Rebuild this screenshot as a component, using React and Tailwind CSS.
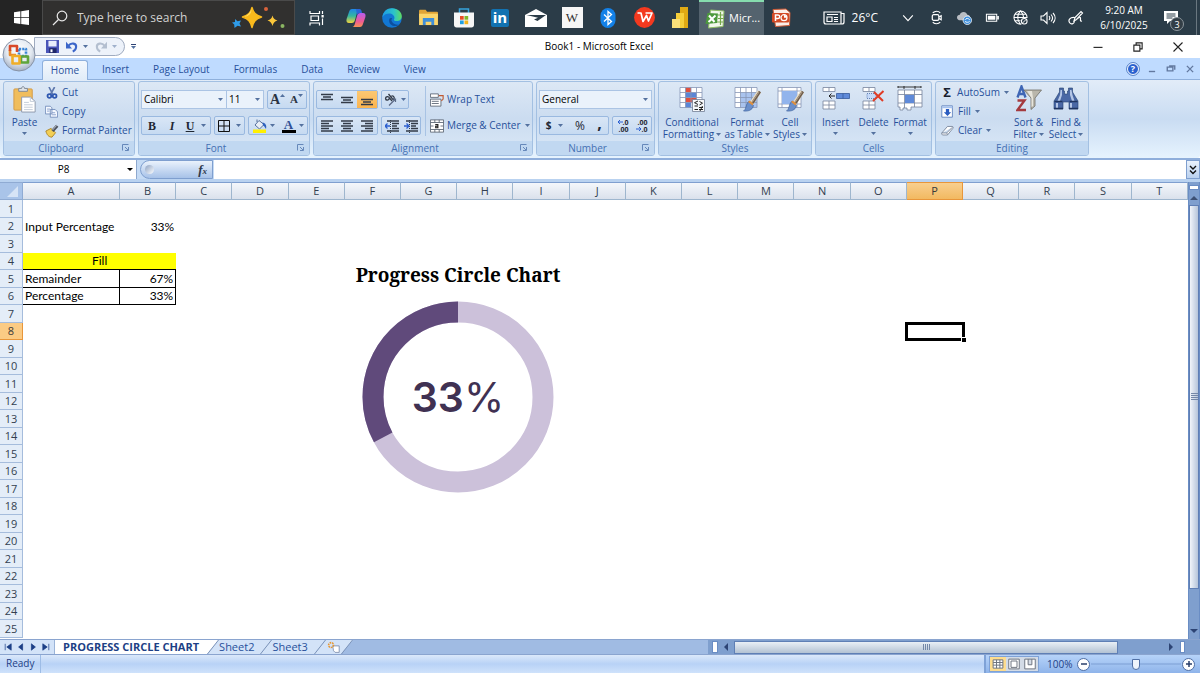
import React from "react";

/* ---------- shared bits ---------- */

function Caret({ className = "" }) {
  return (
    <svg viewBox="0 0 5 3" className={"h-[3px] w-[5px] shrink-0 fill-[#54719f] " + className} aria-hidden="true">
      <path d="M0 0h5L2.5 3z" />
    </svg>
  );
}

function Icon({ box = "0 0 16 16", className = "size-4", children }) {
  return (
    <svg viewBox={box} className={"shrink-0 " + className} fill="none" aria-hidden="true">
      {children}
    </svg>
  );
}

/* ---------- taskbar ---------- */

const WindowsLogo = () => (
  <Icon className="size-[15px]">
    <path fill="#fff" d="M0 2.3 6.8 1.3V7.6H0zM7.7 1.2 16 0v7.6H7.7zM0 8.4h6.8v6.4L0 13.8zM7.7 8.4H16V16l-8.3-1.2z" />
  </Icon>
);

const Sparkles = () => (
  <Icon box="0 0 54 24" className="h-6 w-[54px]">
    <path fill="#f9b91c" d="M20 1.500c1.500 5.500 3.500 7.500 9.500 9.500-6 2-8 4.500-9.500 10.500C18.500 15.500 16.500 13 10.500 11 16.500 9 18.500 7 20 1.500z" stroke="#f9b91c" strokeLinejoin="round" strokeWidth="1.500" />
    <path fill="#ffdc62" d="M19.500 3c.2 4-2 7-7.500 8 4-2 6-4 7.500-8z" />
    <path fill="#fbc63a" d="M40.500 9.500c.8 3 2 4 5 5-3 1-4.200 2.200-5 5.500-.8-3.300-2-4.500-5-5.500 3-1 4.200-2 5-5z" />
    <path fill="#2f9be8" d="m3 13 2.500 2.300L9 14.500l-1.500 3L9 20.500l-3.500-.7L2.500 22l-.3-3.500L0 16.500l3-.5z" />
    <circle cx="34" cy="3" r="2" fill="#d9633c" />
    <circle cx="50.500" cy="20" r="2" fill="#8bb562" />
  </Icon>
);

const TaskView = () => (
  <Icon className="size-4">
    <path stroke="#fff" strokeWidth="1.200" d="M1 1v2.500h9.500V1M2 6h7.500v4.500H2zM1 15.500v-2.500h9.500v2.500M13.500 1v3M13.500 8.500V15" />
    <path fill="#fff" d="M12.500 5h2.200v2.500h-2.200z" />
  </Icon>
);

const Copilot = () => (
  <Icon box="0 0 20 20" className="size-5">
    <defs>
      <linearGradient id="cpA" x1="0" y1="0" x2="0" y2="1">
        <stop offset="0" stopColor="#1f86e8" />
        <stop offset=".5" stopColor="#35b6a0" />
        <stop offset="1" stopColor="#f2d43c" />
      </linearGradient>
      <linearGradient id="cpB" x1="0" y1="0" x2="0" y2="1">
        <stop offset="0" stopColor="#b65cf0" />
        <stop offset=".6" stopColor="#ef5b93" />
        <stop offset="1" stopColor="#f79153" />
      </linearGradient>
    </defs>
    <path fill="url(#cpA)" d="M6 1h7.500c-1.700.5-2 2-2.600 4L9 12c-.6 2-1.300 3-3.200 3H3C1 15 0 13.500.6 11L3 4c.6-2 1.500-3 3-3z" />
    <path fill="url(#cpB)" d="M14 19H6.500c1.700-.5 2-2 2.600-4L11 8c.6-2 1.300-3 3.200-3H17c2 0 3 1.500 2.400 4L17 16c-.6 2-1.500 3-3 3z" />
    <path fill="#2a66d8" d="M10 1h3.500c1.500 0 2 1 2.500 4h-2c-2 0-2.500 1-3 2.500z" />
  </Icon>
);

const Edge = () => (
  <Icon box="0 0 20 20" className="size-5">
    <defs>
      <linearGradient id="edA" x1="0" y1="0" x2="1" y2="0">
        <stop offset="0" stopColor="#1e9be6" />
        <stop offset=".6" stopColor="#2cc4c8" />
        <stop offset="1" stopColor="#5fdc60" />
      </linearGradient>
    </defs>
    <circle cx="10" cy="10" r="9.800" fill="#1277d3" />
    <path fill="url(#edA)" d="M.3 9.200C1 3.500 5 .2 10 .2c5.800 0 9.800 4 9.800 8 0 3.200-2.400 4.800-5 4.800-2.500 0-3.400-1-2.800-1.800.8-1 .6-3-1-4.300C8.500 4.800 3.300 5 .3 9.200z" />
    <path fill="#0d4f9e" d="M7.600 10.500c-1.500 3 .5 7 4.500 7.500 2.500.3 4.500-.5 5.500-1.500-3 .8-7-.5-8-3.500-.4-1 0-2 .5-2.800-1-.4-2-.2-2.500.3z" />
  </Icon>
);

const Explorer = () => (
  <Icon box="0 0 20 18" className="h-[17px] w-[19px]">
    <path fill="#e0a437" d="M0 2c0-.8.400-1.200 1-1.200h6l1.500 2H19c.600 0 1 .4 1 1V9H0z" />
    <path fill="#fbd56b" d="M0 5h20v12H0z" />
    <path fill="#3f8ed8" d="M4 9.500h12V17h-3v-3.500H7V17H4z" />
  </Icon>
);

const Store = () => (
  <Icon box="0 0 20 20" className="size-5">
    <path stroke="#36a3dc" strokeWidth="1.500" d="M5.500 5V1h9v4" />
    <path fill="#f6f6f6" d="M0 4.500h20V17c0 1.600-1 2.500-2.500 2.500h-15C1 19.500 0 18.600 0 17z" />
    <path fill="#e74c25" d="M6 8h3.700v3.700H6z" />
    <path fill="#80b82a" d="M10.500 8h3.700v3.700h-3.700z" />
    <path fill="#22a0e2" d="M6 12.500h3.700v3.700H6z" />
    <path fill="#f5b51b" d="M10.500 12.500h3.700v3.700h-3.700z" />
  </Icon>
);

const Mail = () => (
  <Icon box="0 0 22 18" className="h-[18px] w-[22px]">
    <path fill="#fff" d="M0 6 11 0l11 6v12H0z" />
    <path fill="#2b3c48" d="M1.500 6h19.500l-8.500 6-3.500-1.500 4-1.800z" />
  </Icon>
);

const Bluetooth = () => (
  <Icon box="0 0 16 20" className="h-5 w-4">
    <rect width="15" height="20" x=".5" rx="7.500" fill="#1381e8" />
    <path stroke="#fff" strokeWidth="1.300" d="m4 6.500 7.500 7L8 16.500v-13l3.500 3-7.500 7" />
  </Icon>
);

const Wps = () => (
  <Icon box="0 0 21 21" className="size-[21px]">
    <circle cx="10.500" cy="10.500" r="10.400" fill="#f4391f" />
    <path stroke="#fff" strokeWidth="1.700" d="M3.500 6h3.500l2 8.500 3.500-6 2 5.500L18 6h-6.500" strokeLinejoin="round" />
  </Icon>
);

const PowerBi = () => (
  <Icon box="0 0 18 21" className="h-[21px] w-[18px]">
    <path fill="#e0aa14" d="M9 0h8v21H9z" />
    <path fill="#f6cf3a" d="M5 6h8v15H5z" />
    <path fill="#fbe07a" d="M1 12h8v9H1z" />
  </Icon>
);

const ExcelLogo = () => (
  <Icon box="0 0 20 20" className="size-5">
    <path fill="#f2f8ec" stroke="#8fbf66" d="M5.500 1 19 2l-1 15.500L3.500 19z" />
    <path stroke="#74a84a" strokeWidth="1.200" d="M13 6h5.500M13 9.500h5.500M12 13h6M15.500 3v13" />
    <path fill="#4c9a3c" d="M2.500 4 13 4.500 12 14 .5 15z" />
    <path stroke="#fff" strokeWidth="2" d="m4 6.500 5.500 6.500M10.500 6.500 3.500 13" />
  </Icon>
);

const PptLogo = () => (
  <Icon box="0 0 20 20" className="size-5">
    <path fill="#fbeee8" stroke="#cf5a35" d="m2 1.500 13-.5 4 3.500-.5 13-14 1z" />
    <rect x="1" y="5" width="17" height="9.500" rx="1" fill="#d24a26" />
    <path stroke="#fff" strokeWidth="1.500" d="M4.500 13V7h2.500a1.500 1.500 0 0 1 0 3.500H4.500" />
    <circle cx="13" cy="9.700" r="3" stroke="#fff" strokeWidth="1.200" />
    <path fill="#fff" d="M13 9.700V7a3 3 0 0 1 3 2.700z" />
  </Icon>
);

const News = () => (
  <Icon box="0 0 22 16" className="h-4 w-[22px]">
    <path stroke="#fff" strokeWidth="1.200" d="M1 2h17v12H3c-1.500 0-2-.7-2-2zM18 3.500h3V12c0 1.500-.7 2-2 2h-2M4 7h5v4.500H4zM4 4.500h11M11 7.500h4M11 9.500h4M11 11.500h4" />
  </Icon>
);

const tray = [
  {
    label: "Show hidden icons",
    icon: (
      <Icon className="size-[14px]">
        <path stroke="#fff" strokeWidth="1.300" d="m2.500 5 5.500 6 5.500-6" />
      </Icon>
    ),
  },
  {
    label: "Meet now",
    icon: (
      <Icon className="size-[15px]">
        <rect x="3.500" y="5" width="7" height="6" rx="1.500" stroke="#fff" strokeWidth="1.300" />
        <path stroke="#fff" strokeWidth="1.200" d="m10.500 7.500 2.500-1.500v4.500L10.500 9M4 3c2.500-2 6-2 8 0M4 13c2.500 2 6 2 8 0" />
      </Icon>
    ),
  },
  {
    label: "OneDrive",
    icon: (
      <Icon className="size-[15px]">
        <path fill="#b9bec4" d="M3.500 11C1.500 11 0 10 0 8s1.500-3 3-3c.6-2 2-3 4-3s3.500 1.200 4 3c1.500 0 3 1 3 2.500V11z" />
        <circle cx="11" cy="11" r="4.500" fill="#3f8fdc" stroke="#fff" strokeWidth=".8" />
        <path stroke="#fff" d="M8.500 10.500c1-2 4-2 5 0M13.500 12c-1 1.500-4 1.500-5 0" />
      </Icon>
    ),
  },
  {
    label: "Battery",
    icon: (
      <Icon className="size-[15px]">
        <path stroke="#fff" strokeWidth="1.100" d="M1.500 4.500h11v7.500h-11z" />
        <path fill="#fff" d="M3 6h8v4.500H3zM13 6.500h1.800v3.500H13z" />
      </Icon>
    ),
  },
  {
    label: "Network",
    icon: (
      <Icon className="size-[15px]">
        <path stroke="#fff" strokeWidth="1.100" d="M9 15A7 7 0 1 1 15 8.500M1 8h14M2 4.500h12M2 11.500h6M8 1c-4 4-4 10 0 14M8 1c2.500 2.500 3.500 5 3.300 7.500" />
        <circle cx="12" cy="12" r="3" stroke="#fff" strokeWidth="1.100" />
        <path stroke="#fff" d="m10 14 4-4" />
      </Icon>
    ),
  },
  {
    label: "Volume",
    icon: (
      <Icon className="size-4">
        <path stroke="#fff" strokeWidth="1.100" d="M1 6v4h2.500L7 13.500v-11L3.500 6zM9 6c1 1.200 1 2.800 0 4M11 4.500c1.800 2 1.800 5 0 7M13 3c2.800 3 2.800 7 0 10" />
      </Icon>
    ),
  },
  {
    label: "Pen",
    icon: (
      <Icon className="size-4">
        <path stroke="#fff" strokeWidth="1.200" d="m6 11 1-3.500 6-6 1.500 1.500-6 6.500zM6.500 7.500C2 7 0 10 1.500 12.500S6 14 6.500 11.500M8.500 9.500c2-2.500 4-3 4-1s-.5 3 1.500 2.500" />
      </Icon>
    ),
  },
];

const pinned = [
  ["Copilot", <Copilot />],
  ["Edge", <Edge />],
  ["File Explorer", <Explorer />],
  ["Store", <Store />],
  [
    "LinkedIn",
    <span className="flex size-[18px] items-center justify-center rounded-[2px] bg-[#1272b1] font-['Open_Sans',sans-serif] text-[15px] leading-none font-bold text-white">in</span>,
  ],
  ["Mail", <Mail />],
  [
    "Wikipedia",
    <span className="flex size-[21px] items-center justify-center bg-[#f6f6f6] font-['Liberation_Serif',serif] text-[13px] leading-none text-[#333]">W</span>,
  ],
  ["Bluetooth", <Bluetooth />],
  ["WPS", <Wps />],
  ["Power BI", <PowerBi />],
];

function Taskbar() {
  return (
    <header className="flex h-[35px] items-stretch bg-[#2b3c48] text-white">
      <button aria-label="Start" className="flex w-[42px] items-center justify-center bg-[#242424]">
        <WindowsLogo />
      </button>
      <label className="flex w-[253px] items-center border border-[#4a4a4a] bg-[#31302f] pr-2 pl-[9px]">
        <Icon className="size-4">
          <circle cx="10" cy="6" r="4.800" stroke="#e8e8e8" strokeWidth="1.200" />
          <path stroke="#e8e8e8" strokeWidth="1.200" d="M6.500 9.500 1 15" />
        </Icon>
        <input aria-label="Search" placeholder="Type here to search" className="ml-[9px] min-w-0 flex-1 bg-transparent text-[12px] outline-none placeholder:text-[#d2d2d2]" />
        <Sparkles />
      </label>
      <button aria-label="Task view" className="flex w-[43px] items-center justify-center">
        <TaskView />
      </button>
      {pinned.map(([name, icon]) => (
        <button key={name} aria-label={name} className="flex w-9 items-center justify-center">
          {icon}
        </button>
      ))}
      <button className="ml-px flex w-[65px] items-center gap-[4px] border-t-2 border-[#86dcae] bg-[#54636e] pl-[6px] text-[11px]">
        <ExcelLogo />
        Micr...
      </button>
      <button aria-label="PowerPoint" className="flex w-[34px] items-center justify-center">
        <PptLogo />
      </button>
      <div className="ml-auto flex items-stretch">
        <button className="mr-4 flex items-center gap-[7px] text-[12px]">
          <News />
          26°C
        </button>
        {tray.map((t) => (
          <button key={t.label} aria-label={t.label} className="flex w-7 items-center justify-center">
            {t.icon}
          </button>
        ))}
        <button className="w-[68px] text-center text-[10px] leading-[15px]">
          9:20 AM
          <br />
          6/10/2025
        </button>
        <button aria-label="Notifications" className="relative flex w-[38px] items-center pl-[6px]">
          <Icon className="size-4">
            <path fill="#fff" d="M0 1h14v10H6l-3 3v-3H0z" />
            <path stroke="#2b3c48" d="M2.500 4h9M2.500 6h9M2.500 8h6" />
          </Icon>
          <span className="absolute top-[17px] left-[12px] flex size-[14px] items-center justify-center rounded-full border border-[#8b959c] bg-[#333e46] text-[9px] leading-none">3</span>
        </button>
        <span className="mr-[3px] w-px bg-[#6a7780]" />
      </div>
    </header>
  );
}

/* ---------- title bar and ribbon tabs ---------- */

const OfficeOrb = () => (
  <Icon box="0 0 34 34" className="size-[34px]">
    <defs>
      <radialGradient id="orb" cx=".5" cy=".35" r=".65">
        <stop offset="0" stopColor="#fff" />
        <stop offset=".6" stopColor="#e3e9f1" />
        <stop offset="1" stopColor="#a3afc2" />
      </radialGradient>
    </defs>
    <circle cx="17" cy="17" r="16" fill="url(#orb)" stroke="#8793a8" />
    <g strokeWidth="2.600" strokeLinejoin="round">
      <path stroke="#3c86d6" strokeDasharray="2.200 1" d="M17 11h7v7h-7z" />
      <path stroke="#e98a2b" d="M8 12v5h6" />
      <path stroke="#d8492a" d="M8 13V8h7v6" />
      <path stroke="#5fa53a" d="M19 18.500h7v6h-7z" />
      <path stroke="#f0ae28" d="M10.500 18h7v7.500h-7z" />
    </g>
  </Icon>
);

function TitleBar() {
  return (
    <div className="flex h-[23px] items-center bg-white">
      <div className="flex flex-1 items-center">
        <div className="ml-[34px] flex h-[19px] w-[91px] items-center gap-[7px] rounded-r-full border border-[#9fabc0] bg-[#edf2fa] pl-[11px]">
          <button aria-label="Save">
            <Icon className="size-[13px]">
              <path fill="#4a55b8" d="M0 0h16v16H0z" />
              <path fill="#e9edfb" d="M3 1h10v7H3z" />
              <path fill="#1f2768" d="M4 10h9v6H4z" />
              <path fill="#fff" d="M5.500 11.500H8V15H5.500z" />
            </Icon>
          </button>
          <button aria-label="Undo" className="flex items-center gap-[5px]">
            <Icon className="size-3">
              <path stroke="#3c66c9" strokeWidth="2.800" d="M3 6.500C7 1.500 14 3 13.500 8c-.2 3-2 5-4.500 6" />
              <path fill="#3c66c9" d="M0 1v9h8z" />
            </Icon>
            <Caret />
          </button>
          <button aria-label="Redo" className="flex items-center gap-[5px]">
            <Icon className="size-3">
              <path stroke="#b4bfd0" strokeWidth="2.800" d="M13 6.500C9 1.500 2 3 2.500 8c.2 3 2 5 4.500 6" />
              <path fill="#b4bfd0" d="M16 1v9H8z" />
            </Icon>
            <Caret className="opacity-50" />
          </button>
        </div>
        <button aria-label="Customize Quick Access Toolbar" className="ml-[6px] flex flex-col items-center gap-px">
          <span className="h-px w-[5px] bg-[#2f4374]" />
          <Caret />
        </button>
      </div>
      <h1 className="text-[10px] text-black">Book1 - Microsoft Excel</h1>
      <div className="flex flex-1 items-center justify-end pr-[2px]">
        {[
          ["Minimize", "M2 8.500h12"],
          ["Restore", "M2.500 5.500h8v8h-8zM5.500 5.500v-3h8v8h-3"],
          ["Close", "m2 2 12 12M14 2 2 14"],
        ].map(([name, d]) => (
          <button key={name} aria-label={name} className="flex h-[23px] w-10 items-center justify-center">
            <Icon className="size-[12px]">
              <path stroke="#222" strokeWidth="1.500" d={d} />
            </Icon>
          </button>
        ))}
      </div>
    </div>
  );
}

function RibbonTabs() {
  return (
    <nav className="flex h-[21px] items-end bg-[#bfdbff] pl-[42px] text-[10px] text-[#27509b]">
      <button className="relative -mb-px h-5 w-[46px] rounded-t-[3px] border border-b-0 border-[#8fb0dc] bg-linear-to-b from-[#f4f8fd] to-[#e1ecf8]">Home</button>
      <div className="flex pl-[2px]">
        {["Insert", "Page Layout", "Formulas", "Data", "Review", "View"].map((t) => (
          <button key={t} className="h-5 px-3">
            {t}
          </button>
        ))}
      </div>
      <div className="ml-auto flex h-[21px] items-center gap-[7px] pr-1">
        <button aria-label="Help" className="flex size-3 items-center justify-center rounded-full border border-white bg-[#2c62cf] text-[9px] leading-none font-bold text-white outline outline-[#5c86c9]">
          ?
        </button>
        {[
          ["Minimize workbook", "M3 12h10"],
          ["Restore workbook", "M2 5h9v6H2zM5 3h9v6"],
          ["Close workbook", "m3 3 10 10M13 3 3 13"],
        ].map(([name, d]) => (
          <button key={name} aria-label={name} className="flex size-3 items-center justify-center">
            <Icon className="size-[10px]">
              <path stroke="#63799f" strokeWidth="2.200" d={d} />
            </Icon>
          </button>
        ))}
      </div>
    </nav>
  );
}

/* ---------- ribbon ---------- */

function Group({ title, width, launcher, children }) {
  return (
    <section className={"flex h-[75px] shrink-0 flex-col overflow-hidden rounded-[3px] border border-[#a3c0e2] bg-linear-to-b from-[#dde8f5] via-[#cbdcf0] to-[#dae8f7] " + width}>
      <div className="flex min-h-0 flex-1 items-start">{children}</div>
      <h2 className={"relative flex h-[14px] shrink-0 items-center justify-center bg-[#c1d8f1] text-[10px] text-[#4570b3] " + (launcher ? "pr-4" : "")}>
        {title}
        {launcher && (
          <button aria-label={title + " options"} className="absolute right-1 flex size-[8px]">
            <Icon box="0 0 8 8" className="size-[8px]">
              <path stroke="#6688ba" d="M.5 6.500v-6h6M3 3l3 3M6.500 3v3.500H3" />
            </Icon>
          </button>
        )}
      </h2>
    </section>
  );
}

const Box = ({ className = "", children }) => (
  <div className={"flex h-[19px] items-stretch rounded-[2px] border border-[#9ab9e0] bg-linear-to-b from-[#d9e6f6] to-[#c6daf1] " + className}>{children}</div>
);

const Tool = ({ label, className = "w-5", children }) => (
  <button aria-label={label} className={"flex items-center justify-center gap-[3px] " + className}>
    {children}
  </button>
);

function Combo({ label, value, options, className }) {
  return (
    <label className={"relative flex h-[19px] items-center border border-[#abc4e4] bg-[#eaf2fb] " + className}>
      <select aria-label={label} defaultValue={value} className="w-full appearance-none bg-transparent pl-[2px] text-[10px] text-black outline-none">
        {options.map((o) => (
          <option key={o}>{o}</option>
        ))}
      </select>
      <Caret className="pointer-events-none absolute right-[3px]" />
    </label>
  );
}

function BigButton({ icon, lines, className }) {
  return (
    <button className={"flex flex-col items-center pt-[2px] text-[10px] leading-[12px] text-[#27509b] " + className}>
      <span className="flex h-[30px] items-center">{icon}</span>
      <span className="mt-[2px] whitespace-nowrap">{lines[0]}</span>
      {lines[1] ? (
        <span className="flex items-center gap-[2px] whitespace-nowrap">
          {lines[1]}
          <Caret />
        </span>
      ) : (
        <Caret className="mt-[4px]" />
      )}
    </button>
  );
}

const SmallButton = ({ icon, caret, children }) => (
  <button className="flex h-[19px] items-center gap-1 text-[10px] whitespace-nowrap text-[#27509b]">
    <span className="flex w-[13px] justify-center">{icon}</span>
    {children}
    {caret && <Caret />}
  </button>
);

const Lines = ({ d }) => (
  <Icon box="0 0 14 14" className="size-[14px]">
    <path stroke="#333b48" strokeWidth="1.600" d={d} />
  </Icon>
);

const PasteIcon = () => (
  <Icon box="0 0 24 28" className="h-[27px] w-6">
    <rect x=".5" y="3" width="19" height="22" rx="1" fill="#f0bd5c" stroke="#d39a45" />
    <path fill="#dfe3e8" stroke="#7d8796" d="M5.500 2.500h3c0-2.500 3-2.500 3 0h3v3h-9z" />
    <path fill="#fff" stroke="#8e99ac" d="M8.500 11.500h9l5 4.500v11h-14z" />
    <path stroke="#c3ccd9" d="M17.500 11.500V16h5M11 17h5M11 19.500h9M11 22h9M11 24.500h9" />
  </Icon>
);
const CutIcon = () => (
  <Icon className="size-3">
    <path stroke="#5e78ad" strokeWidth="2.200" d="m4 0 5 10M11.500 0 6 10" />
    <circle cx="4.500" cy="12" r="2.500" stroke="#2f58b0" strokeWidth="2.400" />
    <circle cx="11.500" cy="12" r="2.500" stroke="#2f58b0" strokeWidth="2.400" />
  </Icon>
);
const CopyIcon = () => (
  <Icon className="size-[13px]">
    <path fill="#f4f8ff" stroke="#6984b5" d="M.5 1.500h6l2 2V11h-8zM6.500 5.500h6l3 3V15h-9z" />
    <path stroke="#7b95c4" d="M2.500 5h4M2.500 7.500h3M8.500 9.500h4M8.500 12h5" />
  </Icon>
);
const PainterIcon = () => (
  <Icon className="size-[14px]">
    <path fill="#f3cf55" stroke="#a98024" d="m1 8 6-3 5 5-4 5c-4 0-6-3-7-7z" />
    <path stroke="#4a505c" strokeWidth="3.500" d="m8.500 8 5.500-6" />
    <path stroke="#cfd6e2" strokeWidth="1" d="m8.500 7 5-5.500" />
  </Icon>
);

const Brush = () => (
  <g>
    <path stroke="#e9ddc3" strokeWidth="4" d="M25.500 5.500 18 16.500" />
    <path stroke="#6d5c4c" strokeWidth="2.600" d="M26 5.500 18.500 17" />
    <path stroke="#c4b19a" strokeWidth=".8" d="M25 6 18 16.500" />
    <path fill="#6b8fca" stroke="#365c9b" strokeWidth=".6" d="m14.500 15.500 5 4c-1 5-6 6-10 5.500 3-1.500 2-6.500 5-9.500z" />
    <path fill="#e0913f" d="m15.500 14.500 4 3-1 2-4.500-3.500z" />
  </g>
);
const GridLines = () => <path stroke="#8696b5" strokeWidth=".8" d="M1 1.500h22v20H1zM1 6.500h22M1 11.500h22M1 16.500h22M6.500 1.500v20M12 1.500v20M17.500 1.500v20" />;
const CondIcon = () => (
  <Icon box="0 0 27 26" className="h-[26px] w-[27px]">
    <path fill="#fff" d="M1 1.500h22v20H1z" />
    <path fill="#e0503f" d="M6.500 1.500H12v5H6.500zM6.500 11.500h11v5h-11z" />
    <path fill="#5b86d6" d="M6.500 6.500h11v5h-11zM6.500 16.500H12v5H6.500z" />
    <GridLines />
    <path fill="#f6f8fb" stroke="#727f96" strokeWidth=".8" d="M13.500 13.500h12v12h-12z" />
    <path stroke="#222" d="m19 15-3.500 1.700L19 18.500M15.500 20H19M20.500 15.500l3 1.700-3 1.800M20 21.500h4M20 23.500h4M15.500 23.500H19M23.500 20l-2.500 5" />
  </Icon>
);
const FormatTableIcon = () => (
  <Icon box="0 0 27 26" className="h-[26px] w-[27px]">
    <path fill="#fff" d="M1 1.500h22v20H1z" />
    <path fill="#a9c3ee" d="M6.500 6.500H23v15H6.500z" />
    <GridLines />
    <Brush />
  </Icon>
);
const CellStylesIcon = () => (
  <Icon box="0 0 27 26" className="h-[26px] w-[27px]">
    <path fill="#fff" stroke="#8696b5" strokeWidth=".8" d="M1 1.500h23v20H1zM1 5h23M1 18h23M5 1.500v20M20 1.500v20" />
    <path fill="#92b4ec" d="M5 5h15v13H5z" />
    <Brush />
  </Icon>
);
const InsertIcon = () => (
  <Icon box="0 0 28 26" className="h-[26px] w-7">
    <path fill="#fff" stroke="#76839c" strokeWidth=".8" d="M1 1.500h12v4H1zM7 1.500v4M1 15h12v8H1zM7 15v8M1 19h12" />
    <path fill="#5f8ad9" stroke="#365a9c" strokeWidth=".8" d="M14.500 7.500h13v5h-13zM21 7.500v5" />
    <path stroke="#222" d="M13 10H7M9.500 7.500 7 10l2.500 2.500" />
  </Icon>
);
const DeleteIcon = () => (
  <Icon box="0 0 28 26" className="h-[26px] w-7">
    <path fill="#fff" stroke="#76839c" strokeWidth=".8" d="M3 1.500h12v4H3zM9 1.500v4M3 15h12v8H3zM9 15v8M3 19h12" />
    <path fill="#c5dafa" stroke="#4b6ba5" strokeWidth=".8" strokeDasharray="1 1" d="M7 7.500h9v5H7z" />
    <path stroke="#e03c26" strokeWidth="2" d="m14 6 9 9M23.500 5 13 15" />
  </Icon>
);
const FormatIcon = () => (
  <Icon box="0 0 28 26" className="h-[26px] w-7">
    <path stroke="#222" strokeWidth=".9" d="M2 1h23M8 0v3M19 0v3M2 0v2M25 0v2" />
    <path fill="#fff" stroke="#76839c" strokeWidth=".8" d="M2 4h24v17H15v3h-4v-2H7v2H4v-3H2zM8.500 4v18M18.500 4v17M2 8.500h24M2 17h24" />
    <path fill="#5f8ad9" d="M9 9h9v8H9z" />
  </Icon>
);
const FillIcon = () => (
  <Icon className="size-[13px]">
    <path fill="#fff" stroke="#5276b6" d="M1 1h13v14H1z" />
    <path fill="#a7c3ef" d="M1.500 1.500H14V4H1.500z" />
    <path fill="#2a5cc0" d="M6 5h4v4h2.500L8 13.500 3.500 9H6z" />
  </Icon>
);
const ClearIcon = () => (
  <Icon className="size-[13px]">
    <path fill="#fff" stroke="#6d7a90" d="M1 11 8 3h5.500c1.500 0 2 1 1 2.500L8 13.500H2.500C1 13.500.3 12 1 11zM1 11h6l7-7M7 11l1 2" />
  </Icon>
);
const SortIcon = () => (
  <Icon box="0 0 26 28" className="h-7 w-[26px]">
    <path stroke="#3f66b5" strokeWidth="2.400" d="m1.500 12.500 4-11 4 11M3 9h5" />
    <path stroke="#a43a3f" strokeWidth="2.400" d="M1.500 15.500h7l-7 9.500H10" />
    <path fill="#b9b6ab" stroke="#6f6d66" strokeWidth=".8" d="M8 5h17.500l-6.500 8v8l-4 3.500V13z" />
    <path fill="#e7e5dc" d="M11 6h5l1 7v8l-1.500 1V13z" />
  </Icon>
);
const FindIcon = () => (
  <Icon box="0 0 26 26" className="size-[26px]">
    <path fill="#4a68a5" stroke="#24406f" strokeWidth=".6" d="M6.500 2h4v3h1v3h3V5h1V2h4v4l3 5 2.500 4v8h-9v-7h-6v7H1v-8l2.500-4 3-5z" />
    <path fill="#b4c6e6" d="M7.500 4H9v5l-2 6H4.500L7 9zM17 4h1.500l1 5 2 6H19l-2-6zM3 17h2v5H3zM17 17h2v5h-2z" />
    <path stroke="#1f345f" strokeWidth="1.400" d="M1 22.500h9M16 22.500h9M1.500 15.500h8M16.500 15.500h8" />
  </Icon>
);

function Ribbon() {
  return (
    <div className="rounded-b-[3px] border-t border-[#8fb0dc] bg-linear-to-b from-[#e2ecf8] via-[#c9dcf2] to-[#e6f3fe] pt-px pb-[2px] text-[10px]">
      <div className="flex gap-[3px] pl-[3px]">
        <Group title="Clipboard" width="w-[132px]" launcher>
          <BigButton icon={<PasteIcon />} lines={["Paste"]} className="w-[41px]" />
          <div className="flex flex-col pt-px">
            <SmallButton icon={<CutIcon />}>Cut</SmallButton>
            <SmallButton icon={<CopyIcon />}>Copy</SmallButton>
            <SmallButton icon={<PainterIcon />}>Format Painter</SmallButton>
          </div>
        </Group>

        <Group title="Font" width="w-[172px]" launcher>
          <div className="flex flex-col gap-[7px] pt-2 pl-[2px]">
            <div className="flex">
              <Combo label="Font" value="Calibri" options={["Calibri", "Cambria", "Arial"]} className="w-[86px]" />
              <Combo label="Font size" value="11" options={["10", "11", "12"]} className="-ml-px w-[38px]" />
              <Box className="ml-[3px]">
                <Tool label="Increase font size" className="w-[19px] font-['Liberation_Serif',serif] text-[14px] font-bold text-[#2b3342]">
                  <span>A</span>
                  <Caret className="-mt-[8px] -ml-[3px] rotate-180" />
                </Tool>
                <Tool label="Decrease font size" className="w-[19px] font-['Liberation_Serif',serif] text-[11px] font-bold text-[#2b3342]">
                  <span>A</span>
                  <Caret className="-mt-[8px] -ml-[3px]" />
                </Tool>
              </Box>
            </div>
            <div className="flex gap-[3px] font-['Liberation_Serif',serif] text-[12px] text-[#1f2733]">
              <Box className="w-[70px]">
                <Tool label="Bold" className="w-[20px] font-bold">
                  <b>B</b>
                </Tool>
                <Tool label="Italic" className="w-[20px] font-bold italic">I</Tool>
                <Tool label="Underline" className="w-[28px] gap-[7px] font-bold">
                  <u>U</u>
                  <Caret />
                </Tool>
              </Box>
              <Box>
                <Tool label="Borders" className="w-[29px] gap-[6px]">
                  <Icon box="0 0 12 12" className="size-3">
                    <path stroke="#111" d="M.5.5h11v11H.5zM6 .5v11M.5 6h11" />
                  </Icon>
                  <Caret />
                </Tool>
              </Box>
              <Box>
                <Tool label="Fill color" className="w-[29px] gap-1">
                  <Icon box="0 0 14 14" className="size-[14px]">
                    <path fill="#e9eef7" stroke="#56709c" d="m2 6 4-4.500 5 4-4.500 4.500zM4 3V.5" />
                    <path fill="#2f61bd" d="M9.500 3.500c3 .5 4.500 3 3.500 6.500-1-1.500-1.500-3-3-3.500z" />
                    <path fill="#ffef00" d="M0 10.500h13V14H0z" />
                  </Icon>
                  <Caret />
                </Tool>
                <Tool label="Font color" className="w-[29px] gap-1">
                  <span className="flex h-[14px] w-[14px] items-center justify-center border-b-[3px] border-black text-[13px] leading-none font-bold text-[#2f4f94]">A</span>
                  <Caret />
                </Tool>
              </Box>
            </div>
          </div>
        </Group>

        <Group title="Alignment" width="w-[220px]" launcher>
          <div className="flex flex-col gap-[7px] pt-2 pl-[2px]">
            <div className="flex gap-[3px]">
              <Box>
                <Tool label="Top align">
                  <Lines d="M1 1.500h12M3 4h8M1 6.500h12" />
                </Tool>
                <Tool label="Middle align">
                  <Lines d="M1 4.500h12M3 7h8M1 9.500h12" />
                </Tool>
                <Tool label="Bottom align" className="w-5 bg-linear-to-b from-[#fbc873] to-[#fcb44e]">
                  <Lines d="M1 6.500h12M3 9h8M1 11.500h12" />
                </Tool>
              </Box>
              <Box>
                <Tool label="Orientation" className="w-[26px]">
                  <Icon box="0 0 14 14" className="size-[14px]">
                    <path stroke="#333b48" strokeWidth="1.300" d="M1.500 5.500c0-2 3-2.500 4-.5L8 8M1.500 5.500C2 8 5 7.500 5.500 5M4.500 1 9 6.500c2-.5 1.500-4-1.500-3.500" />
                    <path stroke="#5b6a86" strokeWidth="1.200" d="m5 12.500 6-6M11.500 9V6H8.500" />
                  </Icon>
                  <Caret />
                </Tool>
              </Box>
            </div>
            <div className="flex gap-[3px]">
              <Box>
                <Tool label="Align left">
                  <Lines d="M1 2h12M1 4.500h8M1 7h12M1 9.500h8M1 12h12" />
                </Tool>
                <Tool label="Center">
                  <Lines d="M1 2h12M3 4.500h8M1 7h12M3 9.500h8M1 12h12" />
                </Tool>
                <Tool label="Align right">
                  <Lines d="M1 2h12M5 4.500h8M1 7h12M5 9.500h8M1 12h12" />
                </Tool>
              </Box>
              <Box>
                {[
                  ["Decrease indent", "M5 7H0M2.500 4.500 0 7l2.500 2.500"],
                  ["Increase indent", "M0 7h5M2.500 4.500 5 7 2.500 9.500"],
                ].map(([label, d]) => (
                  <Tool key={label} label={label} className="w-[19px]">
                    <Icon box="0 0 14 14" className="size-[14px]">
                      <path stroke="#333b48" strokeWidth="1.500" d="M2 2h12M7 4.500h7M7 7h5M7 9.500h7M2 12h12" />
                      <path stroke="#333b48" strokeDasharray="1 1" d="M5.500 1v13" />
                      <path stroke="#2c5fd0" strokeWidth="1.300" d={d} />
                    </Icon>
                  </Tool>
                ))}
              </Box>
            </div>
          </div>
          <div className="mt-1 ml-[4px] h-[50px] w-px bg-[#a8c3e4]" />
          <div className="flex flex-col gap-[7px] pt-2 pl-[4px]">
            <SmallButton
              icon={
                <Icon className="size-[14px]">
                  <path fill="#fff" stroke="#5c6674" d="M.5 1h9v4h-9zM.5 7h12v8H.5z" />
                  <path stroke="#5c6674" d="M2 9.500h8M2 12h8" />
                  <path stroke="#c05a31" strokeWidth="1.300" d="M10 3h5v4l-2 2" />
                </Icon>
              }
            >
              Wrap Text
            </SmallButton>
            <SmallButton
              caret
              icon={
                <Icon className="size-[14px]">
                  <path fill="#fff" stroke="#5c6674" d="M.5 1h15v14H.5z" />
                  <path stroke="#5c6674" d="M.5 4h15M.5 12h15M5.500 1v3M10.500 1v3M5.500 12v3M10.500 12v3M1 8h3M12 8h3" />
                  <path stroke="#222" strokeWidth="1.300" d="M6 6.500h3V10H6.500V8.300H9" />
                </Icon>
              }
            >
              Merge &amp; Center
            </SmallButton>
          </div>
        </Group>

        <Group title="Number" width="w-[119px]" launcher>
          <div className="flex flex-col gap-[7px] pt-2 pl-[2px]">
            <Combo label="Number format" value="General" options={["General", "Number", "Percentage"]} className="w-[113px]" />
            <div className="flex gap-[3px] text-[#1f2733]">
              <Box className="w-[70px]">
                <Tool label="Currency" className="w-[29px] gap-[7px] font-bold">
                  $
                  <Caret />
                </Tool>
                <Tool label="Percent style" className="w-[22px] text-[12px]">%</Tool>
                <Tool label="Comma style" className="w-[17px] pb-[6px] text-[16px] font-bold">,</Tool>
              </Box>
              <Box>
                {[
                  ["Increase decimal", ".0", ".00", "M6 2H1M3 0 1 2l2 2", false],
                  ["Decrease decimal", ".00", ".0", "M0 2h5M3 0l2 2-2 2", true],
                ].map(([label, a, b, d, low]) => (
                  <Tool key={label} label={label} className="w-[19px]">
                    <span className="flex flex-col items-end text-[7px] leading-[7px] font-bold">
                      <span className="flex items-center">
                        {!low && (
                          <Icon box="0 0 6 4" className="h-1 w-[6px]">
                            <path stroke="#2c5fd0" d={d} />
                          </Icon>
                        )}
                        {a}
                      </span>
                      <span className="flex items-center">
                        {low && (
                          <Icon box="0 0 6 4" className="h-1 w-[6px]">
                            <path stroke="#2c5fd0" d={d} />
                          </Icon>
                        )}
                        {b}
                      </span>
                    </span>
                  </Tool>
                ))}
              </Box>
            </div>
          </div>
        </Group>

        <Group title="Styles" width="w-[154px]">
          <BigButton icon={<CondIcon />} lines={["Conditional", "Formatting"]} className="w-[66px]" />
          <BigButton icon={<FormatTableIcon />} lines={["Format", "as Table"]} className="w-[44px]" />
          <BigButton icon={<CellStylesIcon />} lines={["Cell", "Styles"]} className="w-[42px]" />
        </Group>

        <Group title="Cells" width="w-[117px]">
          <BigButton icon={<InsertIcon />} lines={["Insert"]} className="w-[39px]" />
          <BigButton icon={<DeleteIcon />} lines={["Delete"]} className="w-[37px]" />
          <BigButton icon={<FormatIcon />} lines={["Format"]} className="w-[36px]" />
        </Group>

        <Group title="Editing" width="w-[154px]">
          <div className="flex w-[73px] flex-col pt-px pl-[5px]">
            <SmallButton caret icon={<span className="text-[13px] leading-none font-bold text-[#16202e]">Σ</span>}>
              AutoSum
            </SmallButton>
            <SmallButton caret icon={<FillIcon />}>
              Fill
            </SmallButton>
            <SmallButton caret icon={<ClearIcon />}>
              Clear
            </SmallButton>
          </div>
          <BigButton icon={<SortIcon />} lines={["Sort &", "Filter"]} className="w-[39px]" />
          <BigButton icon={<FindIcon />} lines={["Find &", "Select"]} className="w-[36px]" />
        </Group>
      </div>
    </div>
  );
}

/* ---------- formula bar ---------- */

function FormulaBar() {
  return (
    <div className="flex h-[24px] items-stretch border-t-2 border-b-[3px] border-t-[#8faedb] border-b-[#b9d2f0] bg-[#c5dbf5]">
      <div className="flex w-[137px] items-center border-r border-[#8ea9cf] bg-white">
        <input aria-label="Name box" defaultValue="P8" className="min-w-0 flex-1 text-center text-[10px] text-black outline-none" />
        <button aria-label="Names" className="mr-[3px]">
          <svg viewBox="0 0 6 3" className="h-[3px] w-[6px]" aria-hidden="true">
            <path d="M0 0h6L3 3z" />
          </svg>
        </button>
      </div>
      <div className="mr-px ml-[3px] flex w-[73px] items-center justify-between rounded-l-full border border-[#7f9fcf] bg-linear-to-b from-[#eaf2fc] to-[#a7c2e8] pr-[5px] pl-1">
        <span className="size-[9px] rounded-full bg-linear-to-br from-[#8ea3c3] to-white" />
        <button className="font-['Liberation_Serif',serif] text-[13px] leading-none font-bold text-[#2f3a4c] italic">
          f<span className="text-[9px]">x</span>
        </button>
      </div>
      <input aria-label="Formula" className="min-w-0 flex-1 bg-white px-1 text-[11px] outline-none" />
      <button aria-label="Expand formula bar" className="flex w-[14px] items-center justify-center border border-[#7f9fcf] bg-linear-to-b from-[#eaf2fc] to-[#b9d0ee]">
        <Icon box="0 0 8 10" className="h-[10px] w-2">
          <path stroke="#111" strokeWidth="1.400" d="m1 1 3 3 3-3M1 5.500l3 3 3-3" />
        </Icon>
      </button>
    </div>
  );
}

/* ---------- worksheet ---------- */

const columns = "ABCDEFGHIJKLMNOPQRST".split("");
const rows = Array.from({ length: 25 }, (_, i) => i + 1);

function cellsFor(row) {
  if (row === 4) {
    return (
      <>
        <td colSpan={2} className="border-b border-black bg-[#ffff00] p-0 text-center">
          Fill
        </td>
        {columns.slice(2).map((c) => (
          <td key={c} className="p-0" />
        ))}
      </>
    );
  }
  const text = {
    A2: "Input Percentage",
    B2: "33%",
    A5: "Remainder",
    B5: "67%",
    A6: "Percentage",
    B6: "33%",
  };
  return columns.map((c) => {
    const boxed = (row === 5 || row === 6) && (c === "A" || c === "B");
    return (
      <td
        key={c}
        className={
          (boxed ? "border-r border-b border-black " : "") + (c === "B" ? "py-0 pr-[2px] pl-0 text-right" : c === "A" ? "py-0 pr-0 pl-[2px]" : "relative p-0")
        }
      >
        {text[c + row]}
        {c === "P" && row === 8 && (
          <div className="absolute -inset-x-[2px] -inset-y-px border-[3px] border-black">
            <span className="absolute -right-[4px] -bottom-[4px] size-[5px] border-t border-l border-white bg-black" />
          </div>
        )}
      </td>
    );
  });
}

function ProgressChart() {
  const r = 85;
  const len = 2 * Math.PI * r;
  return (
    <figure className="absolute top-[80px] left-[348px] flex w-[220px] flex-col items-center">
      <figcaption className="font-['Noto_Serif','Liberation_Serif',serif] text-[19px] leading-[26px] font-bold whitespace-nowrap text-black">Progress Circle Chart</figcaption>
      <div className="mt-[13px] grid place-items-center">
        <svg viewBox="0 0 192 192" className="col-start-1 row-start-1 size-[192px] -rotate-90" fill="none" aria-hidden="true">
          <circle cx="96" cy="96" r={r} stroke="#ccc1da" strokeWidth="21" />
          <circle cx="96" cy="96" r={r} stroke="#604a7b" strokeWidth="21" strokeDasharray={len * 0.33 + " " + len} strokeDashoffset={-len * 0.67} />
        </svg>
        <div className="col-start-1 row-start-1 font-['Inter',sans-serif] text-[41px] leading-none font-semibold text-[#403152]">
          33<span className="font-normal">%</span>
        </div>
      </div>
    </figure>
  );
}

function Sheet() {
  return (
    <main className="flex flex-1">
      <div className="relative min-w-0 flex-1 bg-white">
        <table className="w-full table-fixed border-separate border-spacing-0 font-['Lato',sans-serif] text-[12px] leading-[14px] text-black">
          <colgroup>
            <col className="w-[23px]" />
            <col className="w-[97px]" />
            {columns.slice(1).map((c) => (
              <col key={c} />
            ))}
          </colgroup>
          <thead>
            <tr className="h-[18px] font-['Open_Sans',sans-serif] text-[11px]">
              <th className="border border-l-0 border-[#8fabd3] bg-[#a9c4e9] p-0">
                <svg viewBox="0 0 22 16" className="h-4 w-[22px]" aria-hidden="true">
                  <path fill="#d6e4f6" d="M18 3v11H7z" />
                </svg>
              </th>
              {columns.map((c) => (
                <th
                  key={c}
                  className={
                    "border-y border-r p-0 font-normal " +
                    (c === "P"
                      ? "border-[#e8963a] bg-linear-to-b from-[#f8cf8e] to-[#f2b960] text-[#3a3a3a]"
                      : "border-[#9eb6ce] border-t-[#7f9fcf] bg-linear-to-b from-[#f4f7fb] to-[#dae1ec] text-[#333f50]")
                  }
                >
                  {c}
                </th>
              ))}
            </tr>
          </thead>
          <tbody>
            {rows.map((r) => (
              <tr key={r} className="h-[18px] even:h-[17px]">
                <th className={"border-r border-b p-0 font-['Open_Sans',sans-serif] text-[11px] font-normal " + (r === 8 ? "border-[#e8963a] bg-[#fbcb84] text-[#3a3a3a]" : "border-[#a5bcdc] bg-[#e4edf8] text-[#333f50]")}>{r}</th>
                {cellsFor(r)}
              </tr>
            ))}
          </tbody>
        </table>
        <ProgressChart />
      </div>
      <div className="flex w-3 flex-col items-center border-x border-[#6a8dc4] bg-[#7f9fce] pt-[3px] pb-1">
        <span className="h-[5px] w-full border border-[#6a8dc4] bg-white" />
        <button aria-label="Scroll up" className="flex h-[15px] items-center">
          <Icon box="0 0 8 4" className="h-1 w-2">
            <path fill="#3d5074" d="M4 0l4 4H0z" />
          </Icon>
        </button>
        <div className="flex w-full flex-[10] flex-col items-center justify-center gap-px border border-[#5f7fb5] bg-linear-to-r from-[#f1f5fa] to-[#b6c5da]">
          <i className="h-px w-[7px] bg-[#7488a8]" />
          <i className="h-px w-[7px] bg-[#7488a8]" />
          <i className="h-px w-[7px] bg-[#7488a8]" />
          <i className="h-px w-[7px] bg-[#7488a8]" />
        </div>
        <div className="flex-1" />
        <button aria-label="Scroll down" className="flex h-2 items-center">
          <Icon box="0 0 8 4" className="h-1 w-2">
            <path fill="#2d4474" d="M0 0h8L4 4z" />
          </Icon>
        </button>
      </div>
    </main>
  );
}

/* ---------- sheet tabs ---------- */

const Slant = ({ left, right }) => (
  <svg viewBox="0 0 12 14" className="h-[14px] w-3 shrink-0" aria-hidden="true">
    <path className={left} d="M0 0h12L0 14z" />
    <path className={right} d="M12 0v14H0z" />
    <path d="M11.500 0 .5 14" stroke="#7c93b8" fill="none" />
  </svg>
);

function SheetTabs() {
  return (
    <div className="flex h-4 items-start border-t border-b border-[#8aa4cf] bg-[#a0bbe3] text-[11px] leading-[14px] text-[#27509b]">
      <div className="flex h-[14px] w-[55px] items-center justify-around border-r border-[#9bb4d8] bg-[#d3e3f8] px-[2px]">
        {[
          ["First sheet", "M1.500 1v8M9 1v8L3.500 5z"],
          ["Previous sheet", "M7 1v8L2 5z"],
          ["Next sheet", "M3 1v8l5-4z"],
          ["Last sheet", "M8.500 1v8M1 1v8l5.500-4z"],
        ].map(([label, d]) => (
          <button key={label} aria-label={label}>
            <Icon box="0 0 10 10" className="size-2">
              <path fill="#1c3f86" stroke="#1c3f86" strokeWidth=".9" d={d} />
            </Icon>
          </button>
        ))}
      </div>
      <button className="h-[14px] bg-white pr-2 pl-2 font-bold text-[#1d3f85]">PROGRESS CIRCLE CHART</button>
      <Slant left="fill-white" right="fill-[#d3e3f8]" />
      <button className="h-[14px] bg-[#d3e3f8] pr-[6px]">Sheet2</button>
      <Slant left="fill-[#d3e3f8]" right="fill-[#d3e3f8]" />
      <button className="h-[14px] bg-[#d3e3f8] pr-[6px]">Sheet3</button>
      <Slant left="fill-[#d3e3f8]" right="fill-[#d3e3f8]" />
      <button aria-label="Insert worksheet" className="flex h-[14px] w-[15px] items-center justify-center bg-[#d3e3f8]">
        <Icon className="size-[13px]">
          <path fill="#fff" stroke="#7688a8" d="M7 6h8v8h-5l-2-2z" />
          <circle cx="5" cy="5" r="3" stroke="#e8962e" strokeWidth="2" strokeDasharray="2 1" />
        </Icon>
      </button>
      <Slant left="fill-[#d3e3f8]" right="fill-[#a0bbe3]" />
      <div className="ml-auto flex h-[14px] w-[41%] items-center bg-[#7f9fce]">
        <span className="ml-1 h-3 w-[6px] border border-[#6a8dc4] bg-white" />
        <button aria-label="Scroll left" className="flex w-4 justify-center">
          <Icon box="0 0 4 8" className="h-2 w-1">
            <path fill="#2d4474" d="M4 0v8L0 4z" />
          </Icon>
        </button>
        <div className="flex h-[13px] flex-[8] items-center justify-center gap-px border border-[#5f7fb5] bg-linear-to-b from-[#e9eff6] to-[#b3c2d3]">
          <i className="h-[6px] w-px bg-[#7488a8]" />
          <i className="h-[6px] w-px bg-[#7488a8]" />
          <i className="h-[6px] w-px bg-[#7488a8]" />
          <i className="h-[6px] w-px bg-[#7488a8]" />
        </div>
        <div className="flex-1" />
        <button aria-label="Scroll right" className="flex w-[10px] justify-center">
          <Icon box="0 0 4 8" className="h-2 w-1">
            <path fill="#2d4474" d="M0 0v8l4-4z" />
          </Icon>
        </button>
        <span className="mr-[15px] ml-[4px] h-3 w-[5px] border border-[#6a8dc4] bg-white" />
      </div>
    </div>
  );
}

/* ---------- status bar ---------- */

function StatusBar() {
  return (
    <footer className="flex h-[18px] items-stretch bg-linear-to-b from-[#dbe8fa] via-[#b8d2f6] to-[#cfe2fb] text-[10px] leading-[16px] text-[#1d3f85]">
      <span className="w-[41px] border-r border-[#9dbce6] pl-[6px]">Ready</span>
      <div className="ml-auto flex items-center border-l-2 border-[#7fa2d6] bg-linear-to-b from-[#b6d3f9] to-[#8fb4ea] pl-[3px]">
        <div className="flex h-4 items-stretch border border-[#7fa2d6]">
          {[
            ["Normal view", "bg-[#fddc8e]", "M1.500 2.500h13v11h-13zM1.500 6h13M1.500 9.500h13M6 2.500v11M10.500 2.500v11"],
            ["Page layout view", "bg-[#d3dbe6]", "M1 1.500h14v13H1zM4 4h8v8.500H4z"],
            ["Page break view", "bg-[#d3dbe6]", "M1 1.500h14v13H1zM5.500 1.500V9h5V1.500"],
          ].map(([label, bg, d]) => (
            <button key={label} aria-label={label} className={"flex w-4 items-center justify-center " + bg}>
              <Icon className="size-3">
                <path fill="#fff" stroke="#6d7380" strokeWidth="1.300" d={d} />
              </Icon>
            </button>
          ))}
        </div>
        <button className="ml-2 w-[30px] text-left">100%</button>
        <button aria-label="Zoom out" className="flex size-[13px] items-center justify-center rounded-full border border-[#4f6fa5] bg-white">
          <Icon box="0 0 8 8" className="size-2">
            <path stroke="#2a3f6b" strokeWidth="1.500" d="M1 4h6" />
          </Icon>
        </button>
        <input
          type="range"
          aria-label="Zoom"
          min="0"
          max="100"
          defaultValue="50"
          className="mx-px h-[14px] w-[90px] appearance-none bg-linear-to-b from-transparent from-45% via-[#5f83bd] via-50% to-transparent to-55% [&::-webkit-slider-thumb]:h-[11px] [&::-webkit-slider-thumb]:w-[8px] [&::-webkit-slider-thumb]:appearance-none [&::-webkit-slider-thumb]:rounded-b-[4px] [&::-webkit-slider-thumb]:border [&::-webkit-slider-thumb]:border-[#4f6fa5] [&::-webkit-slider-thumb]:bg-[#eef4fc]"
        />
        <button aria-label="Zoom in" className="mr-[5px] flex size-[13px] items-center justify-center rounded-full border border-[#4f6fa5] bg-white">
          <Icon box="0 0 8 8" className="size-2">
            <path stroke="#2a3f6b" strokeWidth="1.500" d="M1 4h6M4 1v6" />
          </Icon>
        </button>
      </div>
    </footer>
  );
}

export default function App() {
  return (
    <div className="flex min-h-screen flex-col bg-white pb-[2px] font-['Open_Sans','Noto_Sans',sans-serif]">
      <Taskbar />
      <div className="relative">
        <TitleBar />
        <RibbonTabs />
        <button aria-label="Office Button" className="absolute top-[3px] left-[2px]">
          <OfficeOrb />
        </button>
      </div>
      <Ribbon />
      <FormulaBar />
      <Sheet />
      <SheetTabs />
      <StatusBar />
    </div>
  );
}
